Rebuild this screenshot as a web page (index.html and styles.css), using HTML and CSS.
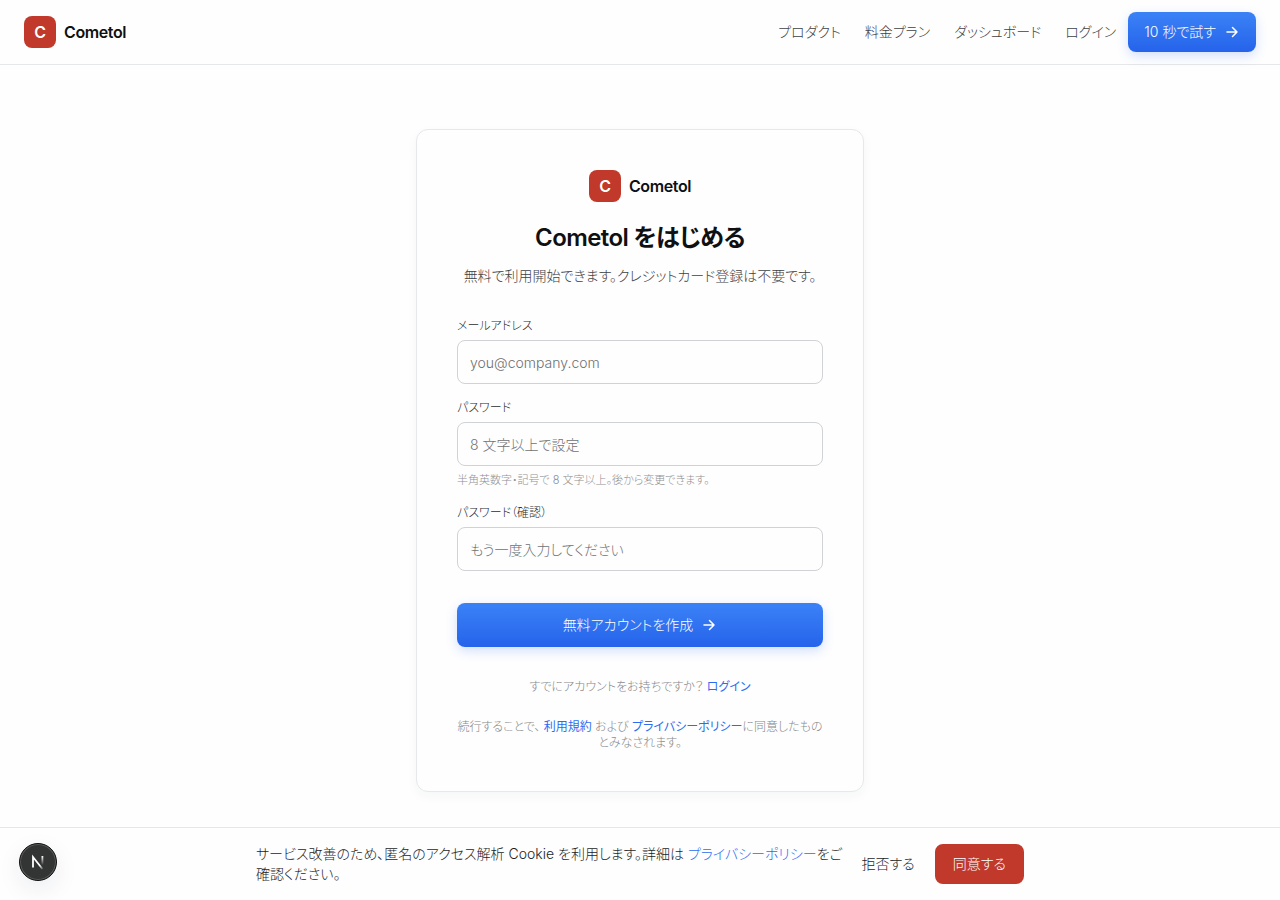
FILE: index.html
```html
<!DOCTYPE html>
<html lang="ja">
<head>
    <meta charset="UTF-8">
    <meta name="viewport" content="width=device-width, initial-scale=1.0">
    <title>Cometol をはじめる</title>
    <link rel="stylesheet" href="styles.css">
</head>
<body>
    <header class="header">
        <a href="#" class="brand"><span class="brand-mark">C</span>Cometol</a>
        <nav class="nav">
            <a href="#">プロダクト</a>
            <a href="#">料金プラン</a>
            <a href="#">ダッシュボード</a>
            <a href="#">ログイン</a>
            <a href="#" class="btn btn-primary">10 秒で試す
                <svg class="arrow" viewBox="0 0 16 16" aria-hidden="true"><path d="M3 8h10M8.500 3.500 13 8l-4.500 4.500"/></svg>
            </a>
        </nav>
    </header>

    <main class="main">
        <section class="card">
            <a href="#" class="brand"><span class="brand-mark">C</span>Cometol</a>
            <h1 class="title">Cometol をはじめる</h1>
            <p class="lead">無料で利用開始できます。クレジットカード登録は不要です。</p>

            <form class="form">
                <div class="field">
                    <label for="email">メールアドレス</label>
                    <input type="email" id="email" placeholder="you@company.com" required>
                </div>
                <div class="field">
                    <label for="password">パスワード</label>
                    <input type="password" id="password" placeholder="8 文字以上で設定" required>
                    <p class="hint">半角英数字・記号で 8 文字以上。後から変更できます。</p>
                </div>
                <div class="field">
                    <label for="confirm">パスワード（確認）</label>
                    <input type="password" id="confirm" placeholder="もう一度入力してください" required>
                </div>
                <button type="submit" class="btn btn-primary btn-submit">無料アカウントを作成
                    <svg class="arrow" viewBox="0 0 16 16" aria-hidden="true"><path d="M3 8h10M8.500 3.500 13 8l-4.500 4.500"/></svg>
                </button>
            </form>

            <p class="note note-login">すでにアカウントをお持ちですか？ <a href="#">ログイン</a></p>
            <p class="note note-terms">続行することで、 <a href="#">利用規約</a> および <a href="#">プライバシーポリシー</a>に同意したものとみなされます。</p>
        </section>
    </main>

    <div class="cookie">
        <div class="cookie-inner">
            <p class="cookie-text">サービス改善のため、匿名のアクセス解析 Cookie を利用します。詳細は <a href="#">プライバシーポリシー</a>をご確認ください。</p>
            <div class="cookie-actions">
                <button type="button" class="btn btn-ghost">拒否する</button>
                <button type="button" class="btn btn-accept">同意する</button>
            </div>
        </div>
    </div>

    <button type="button" class="dev-badge" aria-label="Dev Tools">
        <svg viewBox="0 0 36 36" aria-hidden="true">
            <defs>
                <linearGradient id="stem" x1="0" y1="0" x2="0" y2="1">
                    <stop offset="0" stop-color="#fff"/>
                    <stop offset="1" stop-color="#fff" stop-opacity="0"/>
                </linearGradient>
                <linearGradient id="diagonal" x1="0" y1="0" x2="1" y2="1">
                    <stop offset="0.700" stop-color="#fff"/>
                    <stop offset="1" stop-color="#fff" stop-opacity="0.200"/>
                </linearGradient>
            </defs>
            <path d="M13 23.500V13l9.500 12" fill="none" stroke="url(#diagonal)" stroke-width="1.800"/>
            <rect x="21.500" y="12" width="1.800" height="9" fill="url(#stem)"/>
        </svg>
    </button>
</body>
</html>
```

FILE: styles.css
```css
* {
    box-sizing: border-box;
}
body {
    margin: 0;
    min-height: 100vh;
    background-color: #fefefe;
    color: #0f1011;
    font-family: Inter, "Noto Sans CJK JP", sans-serif;
    font-size: 14px;
    line-height: 20px;
    font-feature-settings: "palt";
}
h1, p {
    margin: 0;
}
a {
    color: #2b6cf3;
    text-decoration: none;
}
button, input {
    font: inherit;
    font-feature-settings: inherit;
}

/* Header */
.header {
    display: flex;
    align-items: center;
    justify-content: space-between;
    height: 65px;
    padding: 0 24px;
    border-bottom: 1px solid #e6e7e9;
}
.brand {
    display: flex;
    align-items: center;
    gap: 8px;
    color: #0f1011;
    font-size: 16px;
    font-weight: 600;
    letter-spacing: -0.025em;
}
.brand-mark {
    display: flex;
    align-items: center;
    justify-content: center;
    width: 32px;
    height: 32px;
    border-radius: 8px;
    background-color: #c0392b;
    color: #fff;
}
.nav {
    display: flex;
    align-items: center;
    gap: 24px;
}
.nav a {
    color: #3f4143;
    font-weight: 300;
}
.nav .btn {
    margin-left: -12px;
    color: #fff;
}

/* Buttons */
.btn {
    display: inline-flex;
    align-items: center;
    justify-content: center;
    gap: 8px;
    height: 40px;
    padding: 0 16px;
    border: none;
    border-radius: 8px;
    font-weight: 300;
    cursor: pointer;
}
.btn-primary {
    background: linear-gradient(#3b82f6, #2563eb);
    color: #fff;
    box-shadow: 0 4px 12px rgba(37, 99, 235, 0.2);
}
.btn-submit {
    width: 100%;
    height: 44px;
    margin-top: 16px;
}
.arrow {
    width: 16px;
    height: 16px;
    fill: none;
    stroke: currentColor;
    stroke-width: 1.5;
    stroke-linecap: round;
    stroke-linejoin: round;
}

/* Sign-up card */
.main {
    display: flex;
    justify-content: center;
    padding: 64px 24px;
}
.card {
    display: flex;
    flex-direction: column;
    align-items: center;
    width: 100%;
    max-width: 448px;
    padding: 40px;
    border: 1px solid #e6e8eb;
    border-radius: 12px;
    background-color: #fefefe;
    box-shadow: 0 4px 12px rgba(15, 40, 80, 0.04);
}
.title {
    margin-top: 20px;
    font-size: 24px;
    line-height: 32px;
    font-weight: 600;
    letter-spacing: -0.025em;
}
.lead {
    margin-top: 12px;
    color: #3f4143;
    font-weight: 300;
}
.form {
    display: flex;
    flex-direction: column;
    gap: 16px;
    width: 100%;
    margin-top: 32px;
}
.field {
    display: flex;
    flex-direction: column;
    gap: 6px;
}
.field label {
    color: #2b2d2f;
    font-size: 12px;
    line-height: 16px;
    font-weight: 300;
}
.field input {
    width: 100%;
    height: 44px;
    padding: 0 12px;
    border: 1px solid #d0d2d5;
    border-radius: 8px;
    background-color: #fefefe;
    color: #0f1011;
}
.field input::placeholder {
    color: #6f7174;
    font-weight: 300;
}
.hint {
    color: #8e9093;
    font-size: 11px;
    line-height: 17px;
    font-weight: 300;
}
.note {
    color: #85878a;
    font-size: 12px;
    line-height: 16px;
    font-weight: 300;
    text-align: center;
}
.note a {
    font-weight: 400;
}
.note-login {
    margin-top: 32px;
}
.note-terms {
    margin-top: 24px;
}

/* Cookie banner */
.cookie {
    position: fixed;
    right: 0;
    bottom: 0;
    left: 0;
    padding: 16px;
    border-top: 1px solid #e6e7e9;
    background-color: #fefefe;
}
.cookie-inner {
    display: flex;
    align-items: center;
    justify-content: space-between;
    gap: 8px;
    max-width: 768px;
    margin: 0 auto;
}
.cookie-text {
    flex: 1;
    color: #1c1d1f;
    font-weight: 300;
}
.cookie-actions {
    display: flex;
    gap: 12px;
}
.btn-ghost {
    padding: 0 8px;
    background: none;
    color: #1c1d1f;
}
.btn-accept {
    padding: 0 18px;
    background-color: #c0392b;
    color: #fff;
}

.dev-badge {
    position: fixed;
    bottom: 19px;
    left: 19px;
    width: 38px;
    height: 38px;
    padding: 0;
    border: 1px solid #111;
    border-radius: 50%;
    background-color: #333534;
    box-shadow: inset 0 0 0 1px #5a5c5b, 0 8px 24px rgba(15, 40, 80, 0.08);
    cursor: pointer;
}
.dev-badge svg {
    display: block;
    width: 36px;
    height: 36px;
}
```
